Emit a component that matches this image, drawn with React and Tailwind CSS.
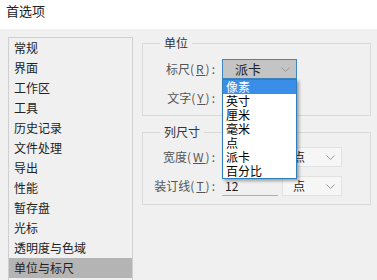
const NAV = ["常规", "界面", "工作区", "工具", "历史记录", "文件处理", "导出", "性能", "暂存盘", "光标", "透明度与色域", "单位与标尺"];
const UNITS = ["像素", "英寸", "厘米", "毫米", "点", "派卡", "百分比"];

function Chevron() {
  return (
    <svg width="9" height="5" viewBox="0 0 9 5" className="shrink-0">
      <path d="M0.5 0.5 L4.5 4.5 L8.5 0.5" fill="none" stroke="#9a9a9a" strokeWidth="1" />
    </svg>
  );
}

function Label({ text, k }) {
  return (
    <span className="w-[74px] shrink-0 text-right text-[#555] leading-[14px] whitespace-nowrap">
      {text}
      <span className="tracking-[2px]">(<span className="underline">{k}</span>):</span>
    </span>
  );
}

function UnitSelect() {
  return (
    <div className="ml-[4px] w-[60px] h-[20px] bg-[#f6f6f6] border border-[#e2e2e2] flex items-center justify-between pl-[10px] pr-[6px]">
      <span className="leading-[14px] text-[#222]">点</span>
      <Chevron />
    </div>
  );
}

export default function App() {
  return (
    <div className="w-[377px] h-[280px] bg-[#f0f0f0] overflow-hidden font-['Noto_Sans_CJK_SC',sans-serif] text-[12px] text-[#222]">
      {/* title */}
      <div className="h-[29px] bg-white pl-[6px] pt-[3px] text-[13px] leading-[16px]">首选项</div>

      <div className="flex pl-[8px]">
        {/* category list */}
        <div className="mt-[8px] w-[125px] h-[260px] border border-[#cfcfcf] flex flex-col">
          {NAV.map((t, i) => (
            <div
              key={t}
              className={[
                "h-[20px] leading-[20px] pl-[5px] shrink-0",
                i === NAV.length - 1 ? "bg-[#b4b4b4]" : "",
              ].join(" ")}
            >
              {t}
            </div>
          ))}
        </div>

        {/* settings */}
        <div className="ml-[9px] pt-[7px] w-[229px]">
          <fieldset className="border border-[#d9d9d9] pb-[7px]">
            <legend className="ml-[17px] px-[4px] leading-[14px] text-[#333]">单位</legend>

            <div className="mt-[9px] h-[20px] flex items-center">
              <Label text="标尺" k="R" />
              <div className="relative z-10 ml-[5px]">
                <div className="w-[75px] h-[20px] bg-[#c4c4c4] border border-[#3d86c6] flex items-center justify-between pl-[12px] pr-[6px]">
                  <span className="text-[13px] leading-[14px]">派卡</span>
                  <Chevron />
                </div>
                <div className="absolute left-0 top-[20px] w-[75px] bg-white border border-[#2e7fb8] shadow-[2px_2px_3px_rgba(0,0,0,0.35)]">
                  {UNITS.map((u, i) => (
                    <div
                      key={u}
                      className={[
                        "h-[14px] leading-[14px] pl-[3px] text-[12px]",
                        i === 0 ? "bg-[#3b8ee8] text-white" : "text-black",
                      ].join(" ")}
                    >
                      {u}
                    </div>
                  ))}
                </div>
              </div>
            </div>

            <div className="mt-[9px] h-[20px] flex items-center">
              <Label text="文字" k="Y" />
              <div className="ml-[5px] w-[75px] h-[20px] bg-[#f6f6f6] border border-[#e2e2e2]" />
            </div>
          </fieldset>

          <fieldset className="mt-[9px] border border-[#d9d9d9] pb-[8px]">
            <legend className="ml-[17px] px-[4px] leading-[14px] text-[#333]">列尺寸</legend>

            <div className="mt-[8px] h-[20px] flex items-center">
              <Label text="宽度" k="W" />
              <div className="ml-[5px] w-[56px] h-[20px] border-b border-[#b0b0b0]" />
              <UnitSelect />
            </div>

            <div className="mt-[9px] h-[20px] flex items-center">
              <Label text="装订线" k="T" />
              <div className="ml-[5px] w-[56px] h-[20px] border-b border-[#b0b0b0] pl-[3px] leading-[19px] text-[#222]">12</div>
              <UnitSelect />
            </div>
          </fieldset>
        </div>
      </div>
    </div>
  );
}
